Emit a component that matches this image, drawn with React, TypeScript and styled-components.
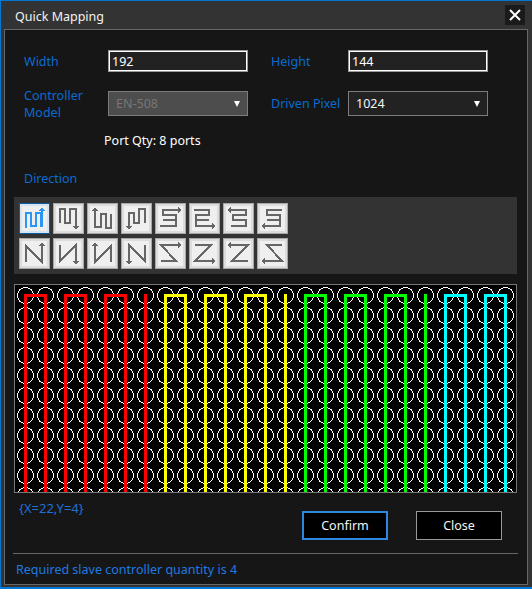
import { FC } from 'react';
import styled, { createGlobalStyle } from 'styled-components';

const GlobalStyle = createGlobalStyle`
  html, body {
    margin: 0;
    padding: 0;
    background: #333;
  }
  * {
    box-sizing: border-box;
  }
`;

const Dialog = styled.div`
  width: 532px;
  height: 589px;
  display: flex;
  flex-direction: column;
  background: #333;
  border-style: solid;
  border-color: #0078d7;
  border-width: 1px 0 2px 1px;
  padding-left: 3px;
  padding-right: 4px;
  padding-bottom: 2px;
  font-family: "Noto Sans", "Liberation Sans", sans-serif;
  font-size: 12px;
  color: #fff;
`;

const TitleBar = styled.div`
  height: 28px;
  flex: none;
  display: flex;
  align-items: flex-start;
  justify-content: space-between;
  padding: 4px 3px 0 11px;
`;

const Title = styled.span`
  margin-top: 3px;
  font-size: 12.5px;
  line-height: 17px;
  color: #f2f2f2;
`;

const CloseIcon = styled.button`
  width: 20px;
  height: 20px;
  padding: 0;
  display: flex;
  align-items: center;
  justify-content: center;
  border: none;
  background: #1a1a1a;
`;

const Panel = styled.div`
  flex: 1;
  display: flex;
  flex-direction: column;
  background: #161616;
  border: 1px solid #666;
  padding-top: 20px;
`;

const FormGrid = styled.div`
  display: grid;
  grid-template-columns: 84px 140px 100px 140px;
  grid-template-rows: 22px 25px;
  row-gap: 19px;
  padding-left: 19px;
  align-items: center;
`;

const Label = styled.label<{ $spaced?: boolean }>`
  color: #0a6ccf;
  font-size: 12.5px;
  line-height: 17px;
  margin-left: ${p => (p.$spaced ? '23px' : '0')};
`;

const FieldLabel = styled(Label)`
  white-space: nowrap;
`;

const Input = styled.div`
  height: 22px;
  padding-left: 3px;
  display: flex;
  align-items: center;
  background: #222;
  border: 1px solid #999;
  box-shadow: inset 0 0 0 1px #fff;
  font-size: 12.5px;
`;

const Select = styled.div<{ $disabled?: boolean }>`
  height: 25px;
  display: flex;
  align-items: center;
  justify-content: space-between;
  padding: 0 7px 0 7px;
  background: ${p => (p.$disabled ? '#4d4d4d' : '#222')};
  border: 1px solid #7c7c7c;
  color: ${p => (p.$disabled ? '#777' : '#f4f4f4')};
  font-size: 12.5px;
`;

const Caret = styled.span`
  width: 0;
  height: 0;
  border-left: 3.5px solid transparent;
  border-right: 3.5px solid transparent;
  border-top: 6px solid #fff;
`;

const PortQty = styled.div`
  margin: 16px 0 0 99px;
  height: 18px;
  line-height: 18px;
  font-size: 12.5px;
`;

const DirectionLabel = styled(Label)`
  display: block;
  margin: 20px 0 0 19px;
`;

const Toolbox = styled.div`
  margin: 10px 0 0 9px;
  width: 503px;
  height: 77px;
  padding: 6px 5px;
  display: grid;
  grid-template-columns: repeat(8, 31px);
  grid-auto-rows: 31px;
  column-gap: 3px;
  row-gap: 4px;
  background: #333;
`;

const ToolButton = styled.button<{ $active?: boolean }>`
  width: 31px;
  height: 31px;
  padding: 0;
  display: block;
  background: #efefef;
  border: 1px solid ${p => (p.$active ? '#0a5a9e' : '#a8a8a8')};
  box-shadow: inset 0 0 0 2px ${p => (p.$active ? '#d4e4f2' : '#dcdcdc')};
  color: ${p => (p.$active ? '#2a95f2' : '#666')};

  svg {
    display: block;
  }
`;

const Board = styled.div`
  margin: 10px 0 0 9px;
  width: 503px;
  height: 209px;
  background: #000;
  border: 1px solid #777;
  overflow: hidden;

  svg {
    display: block;
  }
`;

const FooterRow = styled.div`
  display: flex;
  justify-content: space-between;
  align-items: flex-start;
  padding: 0 15px 0 14px;
  width: 512px;
`;

const Coord = styled.div`
  margin-top: 7px;
  color: #2170d8;
  font-size: 13px;
  line-height: 16px;
`;

const ActionRow = styled.div`
  display: flex;
  gap: 28px;
  margin-top: 18px;
`;

const ActionButton = styled.button<{ $primary?: boolean }>`
  width: 86px;
  height: 29px;
  padding: 0;
  background: #000;
  color: #f4f4f4;
  border: ${p => (p.$primary ? '2px solid #2e86de' : '1px solid #999')};
  font-family: inherit;
  font-size: 12.5px;
`;

const Divider = styled.div`
  margin: 13px 0 0 8px;
  width: 505px;
  height: 1px;
  background: #666;
`;

const Status = styled.div`
  margin: 7px 0 0 11px;
  color: #1f7ae0;
  font-size: 12.5px;
  line-height: 17px;
`;

type IconDef = { line: string; arrow: string };

// serpentine and zigzag scan orders, in a 29px box inside the button border
const icons: IconDef[] = [
  { line: 'M6 24V9H11V22H16V9H20.5V22H22V7', arrow: 'M22 3L25.5 7H18.5Z' },
  { line: 'M6 19V5H11V19H16V5H22V22', arrow: 'M22 26L18.5 22H25.5Z' },
  { line: 'M7 7V23H13V10H18V24H23V10', arrow: 'M7 3L10.5 7H3.5Z' },
  { line: 'M7 22V9H12V19H17V5H23V19', arrow: 'M7 26L3.5 22H10.5Z' },
  { line: 'M22 6H7V11H20V16H7M4 22H20V16', arrow: 'M26 6L22 2.5V9.5Z' },
  { line: 'M4 6H19V11H6V16H19M6 16V22H22', arrow: 'M26 22L22 18.5V25.5Z' },
  { line: 'M7 6H22V11H9V16H22V22H7', arrow: 'M3 6L7 2.5V9.5Z' },
  { line: 'M24 6H9V11H22V16H9M22 16V22H7', arrow: 'M3 22L7 18.5V25.5Z' },
  { line: 'M6 23V7L22 23V7', arrow: 'M22 3L25.5 7H18.5Z' },
  { line: 'M6 6V22L22 6V22', arrow: 'M22 26L18.5 22H25.5Z' },
  { line: 'M7 7V23L23 7V23', arrow: 'M7 3L10.5 7H3.5Z' },
  { line: 'M7 22V6L23 22V6', arrow: 'M7 26L3.5 22H10.5Z' },
  { line: 'M22 6H5L20 22H5', arrow: 'M26 6L22 2.5V9.5Z' },
  { line: 'M5 6H21L5 22H22', arrow: 'M26 22L22 18.5V25.5Z' },
  { line: 'M7 6H24L8 22H24', arrow: 'M3 6L7 2.5V9.5Z' },
  { line: 'M24 6H9L24 22H7', arrow: 'M3 22L7 18.5V25.5Z' },
];

const ScanIcon: FC<IconDef> = ({ line, arrow }) => (
  <svg width="29" height="29" viewBox="0 0 29 29" shapeRendering="crispEdges">
    <path d={line} fill="none" stroke="currentColor" strokeWidth="2" />
    <path d={arrow} fill="currentColor" />
  </svg>
);

const columns = Array.from({ length: 25 }, (_, i) => 10.5 + i * 20);
const rows = Array.from({ length: 11 }, (_, i) => 10.5 + i * 20);

const ports = [
  { color: '#ff0000', start: 0 },
  { color: '#ffff00', start: 140 },
  { color: '#00ff00', start: 280 },
  { color: '#00ffff', start: 420 },
];

const wire = (x: number, last: boolean) => {
  if (last) return `M${x} 9V210`;
  return `M${x} 210V10H${x + 20}V210`;
};

const PixelBoard: FC = () => (
  <svg width="501" height="207" viewBox="0 0 501 207">
    <g fill="none" stroke="#fff" strokeWidth="1" shapeRendering="crispEdges">
      {rows.map(y => columns.map(x => <circle key={`${x}-${y}`} cx={x} cy={y} r="8" />))}
    </g>
    <g fill="none" strokeWidth="3" shapeRendering="crispEdges">
      {ports.map((port, p) => (
        <g key={port.color} stroke={port.color}>
          {[0, 40, 80, 120].map(off => {
            if (p === 3 && off > 40) return null;
            return <path key={off} d={wire(port.start + off + 10.5, off === 120)} />;
          })}
        </g>
      ))}
    </g>
  </svg>
);

const App: FC = () => (
  <>
    <GlobalStyle />
    <Dialog>
      <TitleBar>
        <Title>Quick Mapping</Title>
        <CloseIcon aria-label="Close">
          <svg width="14" height="14" viewBox="0 0 14 14">
            <path d="M2 2L12 12M12 2L2 12" stroke="#fff" strokeWidth="2" fill="none" />
          </svg>
        </CloseIcon>
      </TitleBar>
      <Panel>
        <FormGrid>
          <FieldLabel>Width</FieldLabel>
          <Input>192</Input>
          <FieldLabel $spaced>Height</FieldLabel>
          <Input>144</Input>
          <Label>Controller<br />Model</Label>
          <Select $disabled>EN-508<Caret /></Select>
          <FieldLabel $spaced>Driven Pixel</FieldLabel>
          <Select>1024<Caret /></Select>
        </FormGrid>
        <PortQty>Port Qty: 8 ports</PortQty>
        <DirectionLabel>Direction</DirectionLabel>
        <Toolbox>
          {icons.map((icon, i) => (
            <ToolButton key={icon.line} $active={i === 0}>
              <ScanIcon {...icon} />
            </ToolButton>
          ))}
        </Toolbox>
        <Board>
          <PixelBoard />
        </Board>
        <FooterRow>
          <Coord>{'{X=22,Y=4}'}</Coord>
          <ActionRow>
            <ActionButton $primary>Confirm</ActionButton>
            <ActionButton>Close</ActionButton>
          </ActionRow>
        </FooterRow>
        <Divider />
        <Status>Required slave controller quantity is 4</Status>
      </Panel>
    </Dialog>
  </>
);

export default App;
